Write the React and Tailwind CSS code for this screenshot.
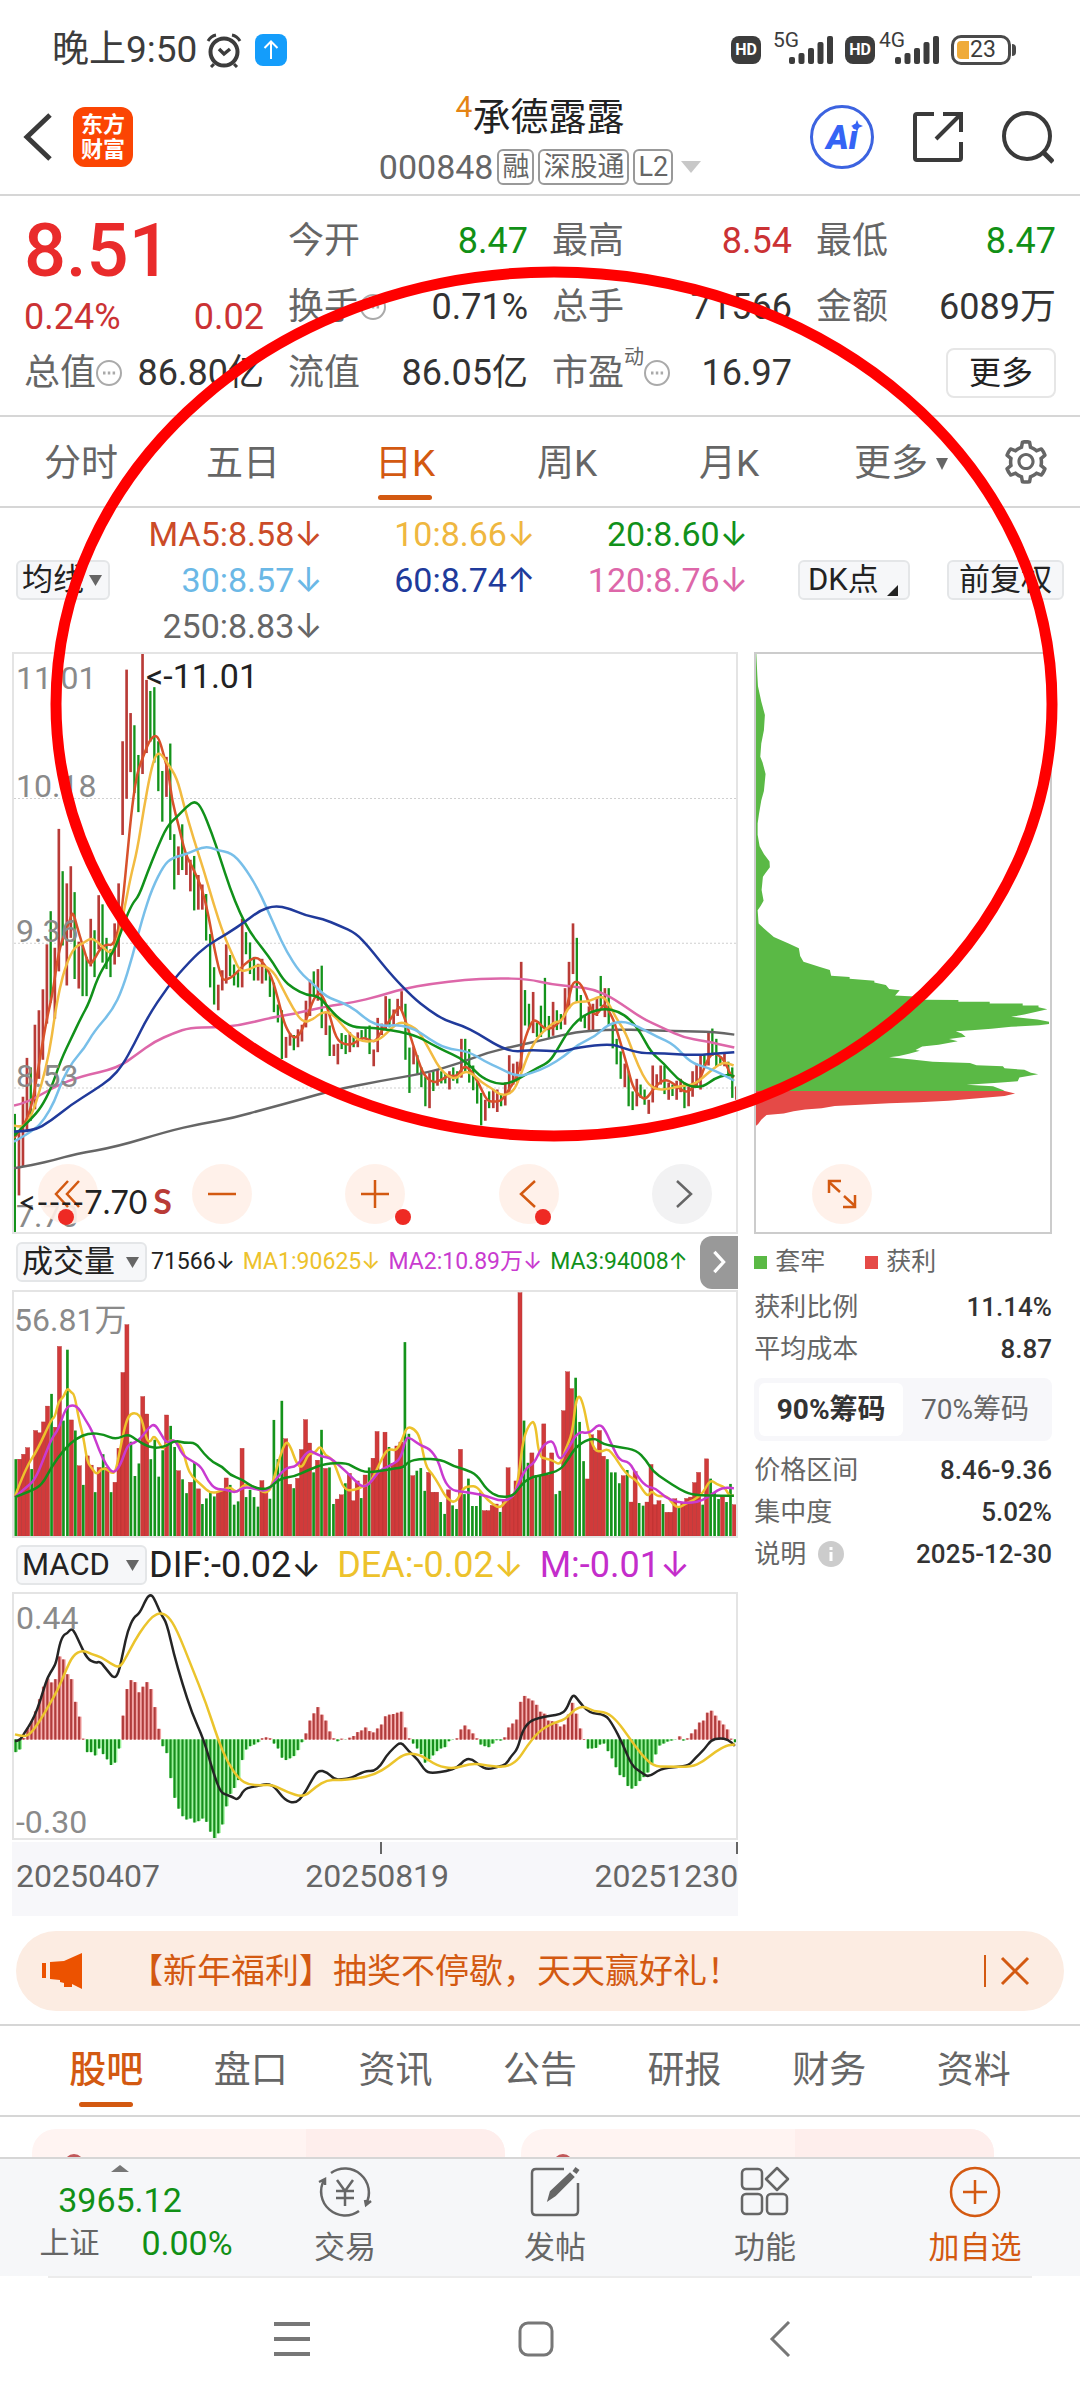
import React, { useState } from 'react';
import clsx from 'clsx';
import { AiOutlineSetting } from 'react-icons/ai';

const FONT = "font-['Roboto','Inter','Noto_Sans_CJK_SC',sans-serif]";

// k line: colour + high:low, in chart units
const CANDLES = `g1242:1552 r1290:1456 r1197:1380 r1095:1290 g1120:1260 r1008:1230 r970:1150 r915:1100 r797:1005 g710:950
r806:992 r494:868 g605:800 r637:905 r592:780 g660:888 r790:913 g800:933 g830:933 r730:855 g760:883 r668:810 g692:845 g780:862
g810:883 r742:850 r637:830 r264:510 r76:415 r190:345 g222:400 g300:450 r35:350 r103:295 g132:265 g122:320 g264:395 g342:475
r305:410 g270:523 g508:653 r540:615 g482:602 r555:615 r575:658 g565:708 r615:706 r640:706 g665:787 g770:910 g857:955 r903:970
r865:918 r797:900 g825:880 g850:905 g870:910 r730:910 g765:823 g792:875 g830:892 r848:892 r835:900 g860:892 g873:935 g898:975
g955:1002 g970:1098 r1040:1095 r1030:1063 g1035:1075 r1020:1067 r1008:1052 r945:1015 r890:985 g868:930 r862:945 g853:1017
r975:1035 g1010:1090 r1060:1090 r1058:1112 g1030:1072 g1035:1085 r1027:1080 g1040:1067 r1028:1067 g1022:1047 g1018:1045
g1010:1085 r1073:1117 r990:1080 r1005:1035 r933:1020 g940:1015 r968:1012 r940:985 r920:970 g953:1100 g1068:1187 r1065:1112
g1088:1137 g1120:1172 g1145:1222 r1135:1227 g1130:1182 r1125:1168 g1130:1162 g1135:1162 r1130:1178 g1120:1155 g1130:1162
r1045:1147 g1045:1130 g1072:1160 g1115:1180 g1157:1215 g1187:1272 r1205:1260 g1183:1227 r1178:1227 r1178:1237 g1190:1222
r1160:1220 r1088:1190 r1110:1165 r1105:1160 r843:1130 g917:1010 g953:1020 r922:1030 g1003:1040 g958:1040 g885:1025 g985:1045
r948:1037 g970:1022 g980:1020 r912:1008 r843:965 r742:875 g780:950 g930:1000 g985:1017 r960:1022 r953:1022 r935:985 g880:960
r912:988 g912:1010 g1003:1070 g1045:1112 g1078:1150 r1110:1172 g1130:1222 g1183:1232 r1150:1222 g1165:1200 g1178:1218
r1205:1242 r1115:1212 r1138:1178 r1115:1165 g1115:1190 r1160:1205 g1165:1195 r1155:1205 r1150:1185 g1160:1227 r1170:1222
r1130:1197 r1110:1172 r1090:1178 g1085:1120 r1025:1115 g1018:1090 g1045:1117 g1090:1115 r1080:1117 g1105:1140 g1120:1200
r1170:1205`.split(/\s+/).map((s) => {
    const [top, bottom] = s.slice(1).split(':').map(Number);
    return { up: s[0] === 'r', top, bottom };
});

const PRICE_LINES = [
    ['#666666', '38,1385 100,1375 160,1363 220,1348 350,1328 500,1288 600,1268 700,1253 800,1228 900,1205 1000,1180 1140,1156 1280,1135 1380,1110 1470,1080 1570,1060 1650,1045 1730,1027 1840,1020 1960,1023 2100,1026 2150,1027 2212,1034'],
    ['#dd67a9', '38,1220 80,1212 160,1170 240,1143 350,1122 410,1085 460,1053 520,1030 570,1015 640,1015 720,1010 800,992 880,980 980,960 1060,950 1140,933 1210,914 1300,900 1400,890 1490,886 1590,888 1660,902 1730,908 1790,915 1850,940 1930,990 2000,1018 2060,1042 2120,1050 2212,1068'],
    ['#d8512b', '38,1305 60,1285 90,1230 110,1130 135,1000 155,925 170,830 185,780 205,740 215,708 228,750 245,800 265,855 285,830 300,805 320,797 335,800 350,770 365,700 380,560 395,430 410,345 430,300 445,265 462,248 475,255 490,300 505,350 515,420 535,485 555,560 580,600 605,650 625,720 645,820 665,890 680,890 700,880 720,862 745,840 770,830 790,845 815,880 835,940 855,1010 880,1045 900,1035 920,995 940,945 955,925 970,930 990,980 1010,1045 1035,1060 1060,1060 1090,1040 1115,1050 1130,1052 1150,1020 1170,1000 1195,965 1203,960 1215,985 1235,1040 1255,1095 1275,1140 1300,1160 1325,1155 1350,1140 1375,1145 1395,1115 1415,1125 1440,1160 1465,1208 1485,1210 1510,1208 1530,1180 1550,1155 1565,1120 1575,1060 1590,1020 1605,995 1620,1000 1640,1020 1660,1018 1680,1005 1700,985 1715,930 1725,895 1745,895 1765,930 1785,980 1800,980 1820,950 1835,975 1850,1000 1870,1060 1890,1120 1905,1170 1925,1195 1945,1205 1965,1180 1985,1160 2005,1152 2025,1160 2045,1175 2070,1187 2090,1170 2110,1150 2125,1110 2145,1082 2165,1087 2185,1105 2200,1140 2212,1145'],
    ['#f2bb41', '38,1272 65,1280 90,1250 120,1170 145,1080 160,990 175,915 195,850 220,805 245,795 270,780 290,790 310,808 330,822 350,790 370,710 390,620 410,550 430,440 450,345 465,300 480,295 500,320 530,360 550,430 580,520 610,600 640,690 670,770 700,830 720,868 745,865 780,848 820,865 850,915 880,965 910,1003 940,995 970,972 1000,980 1030,1010 1060,1040 1090,1052 1120,1052 1145,1045 1180,1015 1205,1000 1235,1010 1260,1025 1290,1070 1320,1120 1350,1145 1375,1150 1395,1130 1420,1135 1450,1160 1480,1175 1510,1195 1545,1185 1565,1145 1590,1085 1615,1045 1640,1022 1670,1000 1690,1000 1710,965 1730,948 1765,948 1790,940 1815,932 1835,955 1855,990 1885,1030 1910,1090 1935,1140 1960,1172 1995,1180 2040,1170 2090,1165 2120,1145 2150,1122 2180,1105 2210,1115'],
    ['#11911a', '38,1300 60,1280 90,1255 120,1225 150,1175 180,1100 210,1045 240,990 265,950 290,885 320,840 345,805 370,740 395,690 415,670 440,610 470,545 500,487 530,462 560,435 585,420 605,440 635,505 660,570 690,650 720,715 750,765 790,810 820,845 850,890 880,912 920,930 955,932 985,960 1015,990 1060,1015 1110,1015 1150,1020 1200,1025 1260,1040 1300,1060 1340,1078 1385,1095 1420,1120 1450,1147 1500,1165 1540,1160 1580,1140 1620,1120 1655,1105 1680,1070 1710,1025 1740,995 1775,975 1820,965 1860,972 1900,995 1930,1030 1960,1080 2000,1110 2040,1150 2080,1172 2120,1170 2150,1150 2190,1138 2212,1143'],
    ['#78bfe9', '38,1315 100,1285 130,1255 160,1210 185,1150 215,1105 250,1070 280,1025 335,970 365,915 395,830 425,730 455,650 490,590 515,570 560,560 615,538 650,550 695,557 730,590 770,645 800,700 830,760 860,815 900,870 940,900 980,935 1030,950 1070,970 1110,1000 1150,1012 1200,1008 1250,1020 1290,1045 1340,1070 1410,1078 1460,1105 1500,1120 1555,1145 1600,1135 1650,1118 1700,1090 1740,1060 1790,1040 1830,1008 1875,998 1920,1012 1980,1040 2030,1060 2080,1108 2130,1120 2180,1140 2212,1155'],
    ['#203a9b', '38,1288 95,1288 150,1260 210,1218 280,1180 330,1150 365,1115 400,1060 440,990 500,910 570,840 620,800 680,770 740,735 780,708 825,695 870,703 920,722 970,730 1020,748 1070,768 1110,805 1140,838 1180,880 1240,935 1290,970 1340,997 1390,1010 1440,1032 1500,1065 1550,1080 1600,1073 1690,1080 1740,1067 1840,1058 1880,1070 1930,1083 2000,1083 2080,1088 2150,1085 2212,1080'],
];

const VOLUMES = `g717 r717 r702 r682 g747 r630 r637 r604 r556 g519 r620 r375 g600 g385 r598 g630 r737 g795 r707 r735 g817 r742 g702
r742 g817 r787 r684 r454 r309 g664 g768 g730 r527 r580 g717 g658 g770 g690 r583 g616 g680 r752 g778 g820 r787 g727 r807 g853 g836
g815 g830 r815 r812 r774 g795 g855 g845 r684 g832 g810 g832 g861 r782 r805 g837 g598 g717 g540 r655 r793 g805 r775 r688 r597 r668
g757 r720 g628 r745 g742 g853 r838 r825 g790 r760 r843 r783 g835 r765 g742 r714 r633 r750 r635 g680 r730 r677 r665 g362 g640 r767
g752 g744 g813 r757 r817 r817 g847 g883 r810 g857 g868 r687 g823 g776 g859 g859 g818 r873 r873 r857 r853 g877 r840 r743 r830 r783
r212 g600 g728 r698 g765 g765 r610 r765 r698 g823 g813 r570 r452 r503 g470 g604 g723 r777 r643 r690 r630 r708 g717 g757 g757 g790
r767 g750 r847 r755 g850 g858 r847 r733 r855 r843 g853 r878 r878 r837 g860 r850 r836 r832 r788 r757 g855 r716 g776 g820 g838 r830
g847 g792 r855`.split(/\s+/);

const VOLUME_LINES = [
    ['#edc22c', '28,830 50,745 75,690 105,595 112,590 120,540 130,530 138,500 146,515 153,520 163,600 172,650 180,725 190,745 200,765 210,745 222,747 232,760 240,755 250,680 262,600 272,578 285,578 295,595 305,660 313,665 320,645 330,665 340,690 350,660 365,660 380,680 390,740 400,770 420,795 440,822 465,812 480,800 495,820 510,792 530,800 560,825 572,780 585,710 598,660 608,680 620,730 632,745 645,700 658,700 670,675 680,705 695,715 705,750 720,810 740,812 760,800 775,790 790,745 805,700 815,685 830,692 842,660 852,618 868,625 880,650 892,740 905,760 920,795 935,835 955,852 970,805 985,798 1000,800 1015,830 1030,850 1048,868 1065,835 1080,825 1088,760 1097,655 1110,610 1122,600 1130,710 1145,715 1160,722 1175,735 1185,690 1200,640 1207,545 1215,520 1225,560 1235,640 1247,690 1260,695 1275,685 1290,710 1305,745 1320,770 1335,780 1350,815 1360,830 1367,812 1378,830 1400,828 1412,855 1425,865 1440,850 1455,842 1475,820 1490,778 1505,795 1520,800 1530,828 1540,828'],
    ['#c93bd0', '28,832 50,805 70,780 90,710 105,655 120,625 135,560 150,552 162,562 175,595 190,630 205,690 220,735 235,762 250,735 265,672 280,668 295,650 310,620 322,610 335,640 347,670 365,655 380,705 400,722 420,740 435,785 450,808 470,808 492,820 510,800 535,808 560,815 580,770 600,742 620,740 645,688 660,700 675,710 690,712 705,730 725,755 745,785 760,803 775,790 795,750 820,735 840,715 850,650 862,655 880,675 900,685 918,720 930,780 945,810 965,815 990,820 1020,828 1050,845 1075,835 1090,780 1105,740 1120,730 1135,682 1150,662 1162,665 1172,725 1190,690 1212,632 1235,640 1257,608 1270,630 1285,680 1300,722 1320,725 1335,765 1355,800 1375,805 1395,832 1420,848 1450,850 1475,842 1495,822 1515,803 1540,805'],
    ['#11911a', '28,832 60,815 85,795 105,740 130,690 155,655 185,637 215,642 240,658 265,640 280,655 310,682 340,682 365,660 385,668 408,667 425,700 445,728 465,740 480,765 505,778 530,803 560,810 585,775 615,770 645,750 680,730 725,728 745,745 765,757 790,755 825,745 845,742 855,725 880,715 925,718 950,738 975,748 1000,765 1020,810 1045,832 1075,830 1090,800 1110,772 1140,765 1175,750 1190,720 1210,675 1245,650 1265,672 1300,680 1335,690 1355,720 1370,755 1395,780 1425,808 1450,825 1490,828 1540,828'],
];

const MACD = `638 630 596 565 545 515 478 440 415 427 417 348 357 402 417 486 531 598 638 638 648 627 644 660 677 670 627 528 447 420
426 457 440 426 447 502 568 620 641 717 777 810 833 843 840 852 848 840 850 880 900 885 858 803 765 747 723 662 630 620 615 608
597 594 597 612 627 655 662 657 650 632 608 582 543 521 502 525 543 576 597 605 598 600 595 590 578 573 564 575 579 567 555 530
525 523 519 516 564 597 612 627 644 670 660 648 635 627 623 605 600 597 570 558 570 582 597 615 620 623 612 602 603 594 564 552
540 486 468 476 482 495 516 522 543 545 552 561 555 525 489 522 567 599 627 627 625 615 612 635 657 684 708 714 741 749 741 726
714 700 674 645 618 612 606 603 600 591 603 597 582 570 549 543 519 513 528 543 555 570 598 608`.split(/\s+/).map(Number);

const MACD_LINES = [
    ['#252525', '28,605 38,605 48,580 62,550 75,510 88,450 97,410 108,385 115,365 122,310 130,282 138,278 147,262 155,278 165,310 180,355 197,368 207,363 222,390 236,415 246,400 256,330 265,270 278,228 290,218 305,170 313,160 320,168 335,220 347,245 362,340 380,430 400,520 425,600 445,700 460,760 472,768 485,775 497,785 510,752 525,745 545,740 560,735 575,745 595,785 618,795 635,770 650,730 665,693 685,700 700,722 715,722 735,718 765,695 782,697 797,680 808,652 825,625 840,607 855,635 875,660 892,700 910,702 935,697 960,685 975,660 990,660 1005,680 1022,692 1045,683 1060,678 1072,650 1085,630 1095,575 1110,545 1130,535 1155,528 1175,524 1188,510 1201,460 1212,480 1235,520 1270,525 1285,555 1305,610 1325,680 1345,700 1360,716 1385,690 1420,683 1445,680 1460,655 1478,630 1492,602 1510,596 1528,600 1542,620'],
    ['#ebc42c', '28,585 45,592 60,585 80,545 100,495 118,450 135,390 150,345 170,328 190,342 210,350 230,370 248,383 262,350 280,300 300,255 318,225 334,215 350,225 368,265 400,380 430,490 455,600 475,670 500,722 520,738 545,740 570,738 600,760 635,777 660,745 685,723 710,724 745,720 785,707 815,680 840,650 860,642 885,650 915,680 950,690 990,672 1020,680 1060,685 1085,665 1105,620 1130,575 1160,550 1185,540 1205,508 1225,499 1245,515 1272,517 1295,545 1320,595 1345,645 1370,682 1400,683 1450,684 1475,668 1500,638 1525,618 1542,616'],
];

const LOCKED = '46,35 47,35 50,90 52,120 62,160 73,195 70,235 62,270 59,305 66,320 75,350 70,395 62,420 55,455 51,480 51,510 57,540 70,560 87,580 88,595 75,610 67,620 63,655 69,683 60,697 51,708 54,743 78,762 100,778 145,795 176,808 180,828 190,843 240,857 270,865 274,880 330,883 330,888 405,893 405,898 440,904 450,915 482,918 468,932 555,936 555,943 660,944 660,948 755,948 755,953 855,953 855,958 903,958 903,963 930,968 900,974 860,982 820,988 900,995 935,1001 935,1007 905,1010 820,1014 760,1019 700,1023 652,1026 670,1032 682,1040 632,1046 658,1052 600,1061 550,1066 530,1075 543,1077 510,1085 480,1091 450,1094 520,1100 582,1106 695,1109 715,1115 795,1118 800,1123 860,1127 880,1135 902,1139 845,1147 840,1157 780,1161 685,1166 765,1170 795,1180 800,1183 46,1183';
const PROFIT = '46,1183 800,1183 832,1189 800,1196 720,1202 630,1208 540,1212 450,1215 362,1219 285,1222 245,1228 195,1231 160,1236 130,1242 78,1246 62,1258 52,1270 46,1274';

// rounds the corners of a polyline by going through the mid points
const smooth = (str) => {
    const p = str.split(' ').map((s) => s.split(',').map(Number));
    let d = `M${p[0][0]} ${p[0][1]}`;
    for (let i = 1; i < p.length - 1; i++) {
        d += `Q${p[i][0]} ${p[i][1]} ${(p[i][0] + p[i + 1][0]) / 2} ${(p[i][1] + p[i + 1][1]) / 2}`;
    }
    const end = p[p.length - 1];
    return `${d}L${end[0]} ${end[1]}`;
};

const Lines = ({ lines }) =>
    lines.map(([color, pts]) => (
        <path key={color} d={smooth(pts)} fill="none" stroke={color} strokeWidth="2.5" vectorEffect="non-scaling-stroke" />
    ));

const Triangle = ({ className }) => (
    <svg viewBox="0 0 14 12" preserveAspectRatio="none" className={className} fill="currentColor" aria-hidden="true">
        <path d="M0 0h14L7 12z" />
    </svg>
);

const Dots = () => (
    <svg viewBox="0 0 26 26" className="size-[26px] shrink-0" fill="none" stroke="#aaa" strokeWidth="2" aria-hidden="true">
        <circle cx="13" cy="13" r="12" />
        <path d="M7 13h2.5M11.8 13h2.5M16.6 13h2.5" strokeWidth="3" />
    </svg>
);

const Signal = () => (
    <svg viewBox="0 0 44 28" className="h-7 w-11" fill="#3c3c3c" aria-hidden="true">
        <rect x="0" y="21" width="6" height="7" rx="2" />
        <rect x="9.5" y="17" width="6" height="11" rx="2" />
        <rect x="19" y="12" width="6" height="16" rx="2" />
        <rect x="28.5" y="6" width="6" height="22" rx="2" />
        <rect x="38" y="0" width="6" height="28" rx="2" />
    </svg>
);

const Hd = () => (
    <span className="flex h-7 w-[30px] items-center justify-center rounded-lg bg-[#3c3c3c] text-[16px] font-bold text-white">HD</span>
);

const StatusBar = () => (
    <div className="flex h-20 items-end justify-between pr-16 pb-[10px] pl-[52px] text-[#3c3c3c]">
        <div className="flex h-10 items-center gap-2">
            <span className="text-[37px] leading-10">晚上9:50</span>
            <svg viewBox="0 0 38 36" className="h-9 w-[38px]" fill="none" stroke="#3c3c3c" strokeWidth="4" aria-hidden="true">
                <circle cx="19" cy="20" r="13.5" />
                <path d="M14 17l5 5 6-5" strokeWidth="3.5" />
                <path d="M3 9q3-5 8-6M35 9q-3-5-8-6M9 32l-3 3M29 32l3 3" strokeWidth="3" />
            </svg>
            <span className="ml-1 flex size-8 items-center justify-center rounded-lg bg-[#149dfb]">
                <svg viewBox="0 0 16 20" className="h-5 w-4" fill="none" stroke="#fff" strokeWidth="2" aria-hidden="true">
                    <path d="M8 19V2M1.5 8L8 1.5 14.5 8" />
                </svg>
            </span>
        </div>
        <div className="flex h-10 items-center">
            <Hd />
            <span className="-mt-5 ml-3 w-4 text-[21px] leading-5">5G</span>
            <Signal />
            <span className="ml-3"><Hd /></span>
            <span className="-mt-5 ml-1 w-4 text-[21px] leading-5">4G</span>
            <Signal />
            <span className="ml-3 flex h-[30px] w-[60px] items-center rounded-[10px] border-3 border-[#4a4a4a] p-[3px] text-[23px] leading-6">
                <span className="mr-px h-full w-3 rounded-l bg-[#efab3a]" />23
            </span>
            <span className="ml-px h-3 w-1 rounded-r bg-[#4a4a4a]" />
        </div>
    </div>
);

const Tag = ({ children }) => (
    <span className="h-9 rounded-md border-2 border-[#999] px-[3px] text-[27px] leading-8">{children}</span>
);

const Header = () => (
    <header className="grid h-[116px] grid-cols-[1fr_auto_1fr] items-center border-b-2 border-[#d6d6d6]">
        <div className="flex items-center gap-5 pl-[23px]">
            <button aria-label="返回">
                <svg viewBox="0 0 30 48" className="h-12 w-[30px]" fill="none" stroke="#3a3a3a" strokeWidth="5" aria-hidden="true">
                    <path d="M27 2L4 24l23 22" />
                </svg>
            </button>
            <a href="#home" className="flex h-[60px] w-[60px] flex-col items-center justify-center rounded-xl bg-[#fb4503] text-[22px] leading-[25px] font-bold text-white">
                <span>东方</span>
                <span>财富</span>
            </a>
        </div>
        <div className="flex flex-col items-center gap-1 pt-1">
            <h1 className="flex text-[38px] leading-[52px] text-[#222]">
                <sup className="top-0 text-[30px] leading-8 text-[#e58414]">4</sup>承德露露
            </h1>
            <div className="flex items-center gap-1 text-[#666]">
                <span className="text-[34px] leading-10">000848</span>
                <Tag>融</Tag>
                <Tag>深股通</Tag>
                <Tag>L2</Tag>
                <Triangle className="ml-1 h-3 w-5 text-[#c8c8c8]" />
            </div>
        </div>
        <div className="flex items-center justify-end gap-[38px] pr-[26px]">
            <button className="relative flex size-16 items-center justify-center rounded-full border-3 border-[#3c63e0] text-[34px] font-black text-[#3564f5] italic">
                Ai
                <svg viewBox="0 0 12 12" className="absolute top-3 right-2 size-3" fill="#3564f5" aria-hidden="true">
                    <path d="M6 0l1.8 4.2L12 6 7.8 7.8 6 12 4.2 7.8 0 6l4.2-1.8z" />
                </svg>
            </button>
            <button aria-label="分享">
                <svg viewBox="0 0 52 52" className="size-[52px]" fill="none" stroke="#3a3a3a" strokeWidth="4" aria-hidden="true">
                    <path d="M22 3H5q-2 0-2 2v42q0 2 2 2h42q2 0 2-2V31" />
                    <path d="M31 3h18v18M49 3L24 28" />
                </svg>
            </button>
            <button aria-label="搜索">
                <svg viewBox="0 0 52 54" className="h-[54px] w-[52px]" fill="none" stroke="#3a3a3a" strokeWidth="4" aria-hidden="true">
                    <circle cx="25" cy="26" r="23" />
                    <path d="M41 42l10 10" strokeWidth="5" />
                </svg>
            </button>
        </div>
    </header>
);

const Cell = ({ label, extra, value, className = 'text-[#333]' }) => (
    <div className="flex h-[66px] items-center justify-between">
        <span className="flex items-center text-[36px] text-[#666]">{label}{extra}</span>
        <span className={clsx('text-[36px] whitespace-nowrap', className)}>{value}</span>
    </div>
);

const Quote = () => (
    <section className="grid h-[221px] grid-cols-4 grid-rows-[66px_66px_66px] gap-x-6 border-b-2 border-[#d6d6d6] px-6 pt-3">
        <div className="flex items-center pt-5 text-[74px] leading-[66px] font-medium text-[#e92b2b]">8.51</div>
        <Cell label="今开" value="8.47" className="text-[#119016]" />
        <Cell label="最高" value="8.54" className="text-[#cb3234]" />
        <Cell label="最低" value="8.47" className="text-[#119016]" />
        <div className="flex h-[66px] items-center justify-between pt-5 text-[36px] text-[#cb3234]">
            <span>0.24%</span>
            <span>0.02</span>
        </div>
        <Cell label="换手" extra={<Dots />} value="0.71%" />
        <Cell label="总手" value="71566" />
        <Cell label="金额" value="6089万" />
        <Cell label="总值" extra={<Dots />} value="86.80亿" />
        <Cell label="流值" value="86.05亿" />
        <Cell label="市盈" extra={<><sup className="-top-4 text-[20px] leading-5">动</sup><Dots /></>} value="16.97" />
        <div className="flex items-center justify-end">
            <button className="h-[50px] w-[110px] rounded-lg border-2 border-[#e6e6e6] text-[32px] leading-10 text-[#222]">更多</button>
        </div>
    </section>
);

const PERIODS = ['分时', '五日', '日K', '周K', '月K'];

const PeriodTabs = () => {
    const [active, setActive] = useState('日K');
    return (
        <nav className="grid h-[91px] grid-cols-[repeat(6,1fr)_108px] border-b-2 border-[#d6d6d6] text-[37px] text-[#666]">
            {PERIODS.map((p) => (
                <button
                    key={p}
                    onClick={() => setActive(p)}
                    className={clsx('relative pt-1', p === active && 'text-[#d35911]')}
                >
                    {p}
                    {p === active && <span className="absolute bottom-[6px] left-1/2 h-[5px] w-[54px] -translate-x-1/2 rounded bg-[#d35911]" />}
                </button>
            ))}
            <button className="flex items-center justify-center gap-2 pt-1 pl-5">
                更多<Triangle className="h-3 w-3" />
            </button>
            <button className="flex items-center justify-center" aria-label="设置">
                <AiOutlineSetting className="size-[50px]" />
            </button>
        </nav>
    );
};

const Picker = ({ value, className }) => (
    <div className={clsx('relative flex items-center rounded-md border-2 border-[#e4e6e8] bg-[#f6f7f9] text-[#222]', className)}>
        <select aria-label={value} className="h-9 w-full appearance-none pl-1 text-[31px] leading-9">
            <option>{value}</option>
        </select>
        <Triangle className="pointer-events-none absolute right-[6px] h-[11px] w-[13px] text-[#666]" />
    </div>
);

const Averages = () => (
    <section className="flex h-36 items-center px-4">
        <Picker value="均线" className="w-[94px]" />
        <div className="grid w-[638px] grid-cols-3 text-right text-[34px] leading-[46px]">
            <span className="text-[#cb4b28]">MA5:8.58↓</span>
            <span className="text-[#efb740]">10:8.66↓</span>
            <span className="text-[#11911a]">20:8.60↓</span>
            <span className="text-[#6bb8e6]">30:8.57↓</span>
            <span className="text-[#203a9b]">60:8.74↑</span>
            <span className="text-[#dd67a9]">120:8.76↓</span>
            <span className="text-[#666]">250:8.83↓</span>
        </div>
        <div className="flex flex-1 justify-between pl-[50px] text-[31px] leading-9 text-[#222]">
            <button className="flex h-10 w-[112px] items-center rounded-md border-2 border-[#e4e6e8] bg-[#f6f7f9] pl-2">
                DK点
                <svg viewBox="0 0 10 10" className="mt-5 ml-2 size-[11px] shrink-0" fill="#222" aria-hidden="true"><path d="M10 0v10H0z" /></svg>
            </button>
            <button className="h-10 w-[117px] rounded-md border-2 border-[#e4e6e8] bg-[#f6f7f9]">前复权</button>
        </div>
    </section>
);

const Round = ({ label, d, dot, gray }) => (
    <button aria-label={label} className={clsx('relative flex size-[60px] items-center justify-center rounded-full', gray ? 'bg-[#f2f2f3]' : 'bg-[#fff0e8]/90')}>
        <svg viewBox="0 0 30 30" className={clsx('size-[30px]', gray ? 'text-[#666]' : 'text-[#d35911]')} fill="none" stroke="currentColor" strokeWidth="2.5" aria-hidden="true">
            <path d={d} />
        </svg>
        {dot && <span className={clsx('absolute -bottom-px size-4 rounded-full bg-[#ee2a24]', dot)} />}
    </button>
);

const PriceChart = () => (
    <div className="relative h-[582px] border-2 border-[#e4e4e4]">
        <svg viewBox="38 35 2180 1517" preserveAspectRatio="none" className="absolute inset-0 h-full w-full">
            {[414, 794, 1174].map((y) => (
                <path key={y} d={`M38 ${y}H2218`} stroke="#d0d0d0" strokeWidth="1" strokeDasharray="2 2" vectorEffect="non-scaling-stroke" />
            ))}
            {CANDLES.map((c, i) => (
                <rect key={i} x={37 + i * 12.03} y={c.top} width={c.up ? 8 : 7} height={c.bottom - c.top} fill={c.up ? '#b93b37' : '#14931b'} />
            ))}
            <Lines lines={PRICE_LINES} />
        </svg>
        <div className="absolute inset-y-0 left-[2px] flex flex-col text-[32px] leading-8 text-[#8a8a8a]">
            <span className="mt-2">11.01</span>
            <span className="mt-[76px]">10.18</span>
            <span className="mt-[113px]">9.36</span>
            <span className="mt-[113px]">8.53</span>
            <span className="mt-auto">7.70</span>
        </div>
        <span className="absolute top-1 left-[132px] text-[34px] leading-9 text-[#222]">&lt;-11.01</span>
        <div className="absolute inset-x-6 bottom-2 flex justify-between">
            <Round label="快退" d="M15 2L3 15l12 13M26 2L14 15l12 13" dot="left-5" />
            <Round label="缩小" d="M1 15h28" />
            <Round label="放大" d="M1 15h28M15 1v28" dot="left-[50px]" />
            <Round label="前移" d="M21 2L7 15l14 13" dot="left-9" />
            <Round label="后移" d="M10 2l14 13-14 13" gray />
        </div>
        <span className="absolute bottom-3 left-1 flex items-baseline gap-[6px] font-['Lato',sans-serif] text-[32px] leading-9 text-[#222]">
            &lt;----7.70<span className="text-[34px] font-bold text-[#b93b37]">S</span>
        </span>
    </div>
);

const VolumeHead = () => (
    <div className="flex h-14 items-center pl-1">
        <Picker value="成交量" className="w-[131px]" />
        <div className="flex flex-1 gap-2 pl-1 text-[23px] whitespace-nowrap">
            <span className="text-[#222]">71566↓</span>
            <span className="text-[#edc22c]">MA1:90625↓</span>
            <span className="text-[#c93bd0]">MA2:10.89万↓</span>
            <span className="text-[#11911a]">MA3:94008↑</span>
        </div>
        <button aria-label="更多指标" className="flex h-[53px] w-[38px] shrink-0 items-center justify-center rounded-l-xl bg-[#999]">
            <svg viewBox="0 0 16 26" className="h-6 w-4" fill="none" stroke="#fff" strokeWidth="3.5" aria-hidden="true"><path d="M3 2l10 11L3 24" /></svg>
        </button>
    </div>
);

const VolumeChart = () => (
    <div className="relative h-[248px] border-2 border-[#e4e4e4]">
        <svg viewBox="26 210 1519 740" preserveAspectRatio="none" className="absolute inset-0 h-full w-full">
            {VOLUMES.map((v, i) => {
                const top = Number(v.slice(1));
                return v[0] === 'r' ? (
                    <rect key={i} x={25.5 + i * 8.35} y={top} width="8.35" height={950 - top} fill="#d13a3a" stroke="#b03030" strokeWidth="1" />
                ) : (
                    <rect key={i} x={27 + i * 8.35} y={top} width="5.6" height={950 - top} fill="#14931b" />
                );
            })}
            <Lines lines={VOLUME_LINES} />
        </svg>
        <span className="absolute top-3 left-0 text-[32px] leading-8 text-[#8a8a8a]">56.81万</span>
    </div>
);

const MacdHead = () => (
    <div className="flex h-[54px] items-center pl-1">
        <Picker value="MACD" className="w-[131px]" />
        <div className="flex gap-4 pl-[2px] text-[36px] whitespace-nowrap">
            <span className="text-[#222]">DIF:-0.02↓</span>
            <span className="text-[#edc22c]">DEA:-0.02↓</span>
            <span className="text-[#c42dcb]">M:-0.01↓</span>
        </div>
    </div>
);

const MacdChart = () => (
    <div className="relative h-[248px] border-2 border-[#e4e4e4]">
        <svg viewBox="26 158 1519 742" preserveAspectRatio="none" className="absolute inset-0 h-full w-full">
            {MACD.map((y, i) => (
                <g key={i}>
                    <rect x={26 + i * 8.36} y={Math.min(y, 600)} width="8.36" height={Math.abs(y - 600)} fill={y < 600 ? '#f3a5a5' : '#9bf09b'} />
                    <rect x={27 + i * 8.36} y={Math.min(y, 600)} width="4.5" height={Math.abs(y - 600) + 1} fill={y < 600 ? '#b03c3c' : '#178f1d'} />
                </g>
            ))}
            <Lines lines={MACD_LINES} />
        </svg>
        <div className="absolute inset-y-0 left-[2px] flex flex-col justify-between pt-2 text-[32px] leading-8 text-[#8a8a8a]">
            <span>0.44</span>
            <span>-0.30</span>
        </div>
    </div>
);

const DateAxis = () => (
    <div className="mt-[2px] h-[74px] bg-[#f7f7fa] text-[32px] text-[#666]">
        <div className="grid grid-cols-[370fr_357fr]">
            <span className="h-3 border-r-2 border-[#666]" />
            <span className="h-3 border-r-2 border-[#666]" />
        </div>
        <div className="flex justify-between pl-1 leading-[44px]">
            <span>20250407</span>
            <span>20250819</span>
            <span>20251230</span>
        </div>
    </div>
);

const Info = ({ label, value }) => (
    <div className="flex h-[42px] items-center justify-between text-[26px]">
        <dt className="flex items-center gap-3 text-[#666]">{label}</dt>
        <dd className="font-medium text-[#333]">{value}</dd>
    </div>
);

const Chips = () => {
    const [range, setRange] = useState('90%筹码');
    return (
        <aside>
            <div className="relative h-[582px] border-2 border-[#ccc]">
                <svg viewBox="46 35 891 1518" preserveAspectRatio="none" className="absolute inset-0 h-full w-full">
                    <polygon points={LOCKED} fill="#5ab945" />
                    <polygon points={PROFIT} fill="#e54a47" />
                </svg>
                <div className="absolute bottom-2 left-14">
                    <Round label="展开" d="M13 13L2 3M2 14V2h12M17 17l11 10M28 16v12H16" />
                </div>
            </div>
            <div className="flex h-[52px] items-center gap-10 pt-1 text-[25px] text-[#666]">
                <span className="flex items-center gap-2"><i className="size-[13px] bg-[#5ab945]" />套牢</span>
                <span className="flex items-center gap-2"><i className="size-[13px] bg-[#e54a47]" />获利</span>
            </div>
            <dl>
                <Info label="获利比例" value="11.14%" />
                <Info label="平均成本" value="8.87" />
            </dl>
            <div className="my-2 flex h-[63px] rounded-lg bg-[#f7f7fa] p-[5px] text-[28px]">
                {['90%筹码', '70%筹码'].map((r) => (
                    <button
                        key={r}
                        onClick={() => setRange(r)}
                        className={clsx('flex-1 rounded-md whitespace-nowrap', r === range ? 'bg-white font-bold text-[#333]' : 'text-[#666]')}
                    >
                        {r}
                    </button>
                ))}
            </div>
            <dl>
                <Info label="价格区间" value="8.46-9.36" />
                <Info label="集中度" value="5.02%" />
                <Info
                    label={<>说明<svg viewBox="0 0 26 26" className="size-[26px]" aria-hidden="true"><circle cx="13" cy="13" r="13" fill="#ccc" /><path d="M13 6v3M13 11v9" stroke="#fff" strokeWidth="3" /></svg></>}
                    value="2025-12-30"
                />
            </dl>
        </aside>
    );
};

const Promo = () => (
    <div className="mx-4 mt-[15px] flex h-20 items-center rounded-full bg-[#fcece2] pr-[34px] pl-[26px] text-[#d35911]">
        <svg viewBox="0 0 40 36" className="h-9 w-10" fill="#ec5200" aria-hidden="true">
            <path d="M0 10h4v15H0zM8 9L22 8 40 0v36l-6-3-4-2v3h-8v-4l-4-1v-2L8 26z" />
        </svg>
        <p className="ml-[47px] flex-1 text-[34px] whitespace-nowrap">【新年福利】抽奖不停歇，天天赢好礼！</p>
        <button aria-label="关闭" className="flex items-center border-l-2 border-[#d35911] pl-[14px]">
            <svg viewBox="0 0 30 30" className="h-8 w-[30px]" fill="none" stroke="currentColor" strokeWidth="3" aria-hidden="true"><path d="M2 2l26 26M28 2L2 28" /></svg>
        </button>
    </div>
);

const SECTIONS = ['股吧', '盘口', '资讯', '公告', '研报', '财务', '资料'];

const SectionTabs = () => {
    const [active, setActive] = useState('股吧');
    return (
        <nav className="mt-[13px] flex h-[93px] border-y-2 border-[#d6d6d6] px-[34px] text-[37px] text-[#666]">
            {SECTIONS.map((s) => (
                <button key={s} onClick={() => setActive(s)} className={clsx('relative flex-1', s === active && 'font-medium text-[#d35911]')}>
                    {s}
                    {s === active && <span className="absolute bottom-2 left-1/2 h-[5px] w-[54px] -translate-x-1/2 rounded bg-[#d35911]" />}
                </button>
            ))}
        </nav>
    );
};

const Feed = () => (
    <div className="flex h-10 gap-4 overflow-hidden pt-3 pr-[86px] pl-8">
        {[0, 1].map((n) => (
            <div key={n} className="relative flex h-24 flex-1 justify-end overflow-hidden rounded-3xl bg-[#fff4f2]">
                <span className="w-[42%] bg-[#feeeec]" />
                <span className="absolute top-[25px] left-8 size-5 rounded-full bg-[#c2585a]" />
            </div>
        ))}
    </div>
);

const Action = ({ label, children, className = 'text-[#666]' }) => (
    <button className={clsx('flex flex-1 flex-col items-center gap-2 text-[31px] leading-[42px]', className)}>
        <svg viewBox="0 0 54 54" className="size-[54px]" fill="none" stroke="currentColor" strokeWidth="2.5" aria-hidden="true">{children}</svg>
        {label}
    </button>
);

const BottomBar = () => (
    <footer className="flex h-[119px] border-t-2 border-[#d6d6d6] bg-[#f6f7f9] pt-[6px]">
        <a href="#index" className="flex w-[240px] flex-col items-center text-[34px]">
            <Triangle className="h-[7px] w-[18px] rotate-180 text-[#777]" />
            <span className="mt-2 leading-10 text-[#119016]">3965.12</span>
            <span className="flex items-center gap-[42px] pl-8 leading-[46px] text-[#119016]">
                <span className="text-[30px] text-[#666]">上证</span>0.00%
            </span>
        </a>
        <Action label="交易">
            <path d="M13 8a24 24 0 0 1 35 31M41 46A24 24 0 0 1 6 15M1 17l6-3v6M53 36l-5 4-1-5" />
            <path d="M19 15l8 11 8-11M27 26v15M18 26h18M18 33h18" />
        </Action>
        <Action label="发帖">
            <path d="M36 4H8Q4 4 4 8v38q0 4 4 4h38q4 0 4-4V18" />
            <path d="M21 34l2-7L42 9l3 3-18 18z" fill="currentColor" />
            <path d="M46 4l4 3" strokeWidth="5" />
        </Action>
        <Action label="功能">
            <rect x="4" y="4" width="20" height="20" rx="4" />
            <rect x="4" y="29" width="20" height="20" rx="4" />
            <rect x="29" y="29" width="20" height="20" rx="4" />
            <path d="M39 3l11 11-11 11-11-11z" strokeLinejoin="round" />
        </Action>
        <Action label="加自选" className="text-[#d35911]">
            <circle cx="27" cy="27" r="24" />
            <path d="M15 27h24M27 15v24" />
        </Action>
    </footer>
);

const SystemNav = () => (
    <div className="mx-12 flex flex-1 items-center justify-center gap-[208px] border-t-2 border-[#ececec] pr-2 text-[#777]">
        <button aria-label="任务">
            <svg viewBox="0 0 36 36" className="size-9" stroke="currentColor" strokeWidth="4" aria-hidden="true"><path d="M0 3h36M0 18h36M0 33h36" /></svg>
        </button>
        <button aria-label="主页">
            <svg viewBox="0 0 36 36" className="size-9" fill="none" stroke="currentColor" strokeWidth="3" aria-hidden="true"><rect x="2" y="2" width="32" height="32" rx="8" /></svg>
        </button>
        <button aria-label="后退">
            <svg viewBox="0 0 36 36" className="size-9" fill="none" stroke="currentColor" strokeWidth="3" aria-hidden="true"><path d="M27 1L10 18l17 17" /></svg>
        </button>
    </div>
);

export default function App() {
    return (
        <div className={clsx('relative flex min-h-screen flex-col bg-white', FONT)}>
            <StatusBar />
            <Header />
            <Quote />
            <PeriodTabs />
            <Averages />
            <main className="grid grid-cols-[minmax(0,727fr)_minmax(0,298fr)] gap-4 pr-7 pl-3">
                <div>
                    <PriceChart />
                    <VolumeHead />
                    <VolumeChart />
                    <MacdHead />
                    <MacdChart />
                    <DateAxis />
                </div>
                <Chips />
            </main>
            <Promo />
            <SectionTabs />
            <Feed />
            <BottomBar />
            <SystemNav />
            {/* hand-drawn marker ring around the k line */}
            <svg viewBox="0 0 1008 876" className="pointer-events-none absolute top-[266px] left-[50px] h-[876px] w-[1008px]" aria-hidden="true">
                <ellipse cx="504" cy="438" rx="498" ry="432" fill="none" stroke="#ff0000" strokeWidth="11" />
            </svg>
        </div>
    );
}
